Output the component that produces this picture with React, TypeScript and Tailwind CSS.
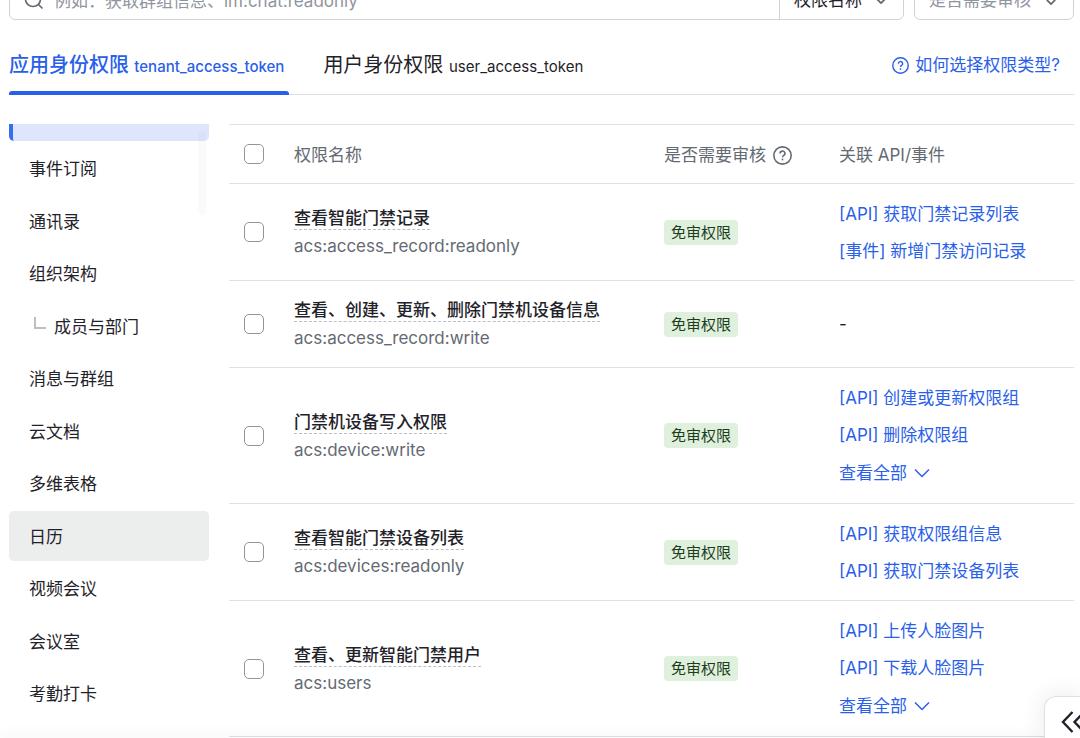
import type { ReactNode } from "react";
import clsx from "clsx";

interface IScope {
  name: string;
  code: string;
  links: string[];
  more?: boolean;
}

interface ICategory {
  label: string;
  hovered?: boolean;
  child?: boolean;
}

const categories: ICategory[] = [
  { label: "事件订阅" },
  { label: "通讯录" },
  { label: "组织架构" },
  { label: "成员与部门", child: true },
  { label: "消息与群组" },
  { label: "云文档" },
  { label: "多维表格" },
  { label: "日历", hovered: true },
  { label: "视频会议" },
  { label: "会议室" },
  { label: "考勤打卡" },
];

const scopes: IScope[] = [
  {
    name: "查看智能门禁记录",
    code: "acs:access_record:readonly",
    links: ["[API] 获取门禁记录列表", "[事件] 新增门禁访问记录"],
  },
  {
    name: "查看、创建、更新、删除门禁机设备信息",
    code: "acs:access_record:write",
    links: [],
  },
  {
    name: "门禁机设备写入权限",
    code: "acs:device:write",
    links: ["[API] 创建或更新权限组", "[API] 删除权限组"],
    more: true,
  },
  {
    name: "查看智能门禁设备列表",
    code: "acs:devices:readonly",
    links: ["[API] 获取权限组信息", "[API] 获取门禁设备列表"],
  },
  {
    name: "查看、更新智能门禁用户",
    code: "acs:users",
    links: ["[API] 上传人脸图片", "[API] 下载人脸图片"],
    more: true,
  },
];

const HelpIcon = ({ className }: { className: string }) => (
  <svg
    viewBox="0 0 18 18"
    fill="none"
    stroke="currentColor"
    strokeWidth="1.5"
    className={className}
    aria-hidden
  >
    <circle cx="9" cy="9" r="8.2" />
    <path d="M6.700 7.100a2.300 2.200 0 1 1 3.500 1.800c-.8.5-1.200.9-1.200 1.700" />
    <path d="M9 11.900v1.700" />
  </svg>
);

const ChevronIcon = ({ className }: { className: string }) => (
  <svg
    viewBox="0 0 16 10"
    fill="none"
    stroke="currentColor"
    className={className}
    aria-hidden
  >
    <path d="M1 1.5 8 8.5 15 1.5" />
  </svg>
);

const Checkbox = ({ label }: { label: string }) => (
  <input
    type="checkbox"
    aria-label={label}
    className="block size-5 appearance-none rounded-[5px] border border-[#8f959e] bg-white checked:bg-[#2a5fe9]"
  />
);

const FilterSelect = ({
  label,
  option,
  className,
}: {
  label: string;
  option: string;
  className: string;
}) => (
  <div className={clsx("relative h-[38px] border-[#d0d3d6]", className)}>
    <select
      aria-label={label}
      className="size-full appearance-none bg-transparent pl-[14px] outline-none"
    >
      <option>{option}</option>
    </select>
    <ChevronIcon className="pointer-events-none absolute right-[17px] top-4 h-[6px] w-[10px] stroke-3 text-[#646a73]" />
  </div>
);

const SearchBar = () => (
  <div className="-mt-[18px] flex gap-[10px]">
    <div className="flex min-w-0 flex-1 rounded-md border border-[#d0d3d6]">
      <label className="flex min-w-0 flex-1 items-center gap-[10px] pl-[14px]">
        <svg
          viewBox="0 0 20 20"
          fill="none"
          stroke="currentColor"
          strokeWidth="1.7"
          className="size-5 shrink-0 text-[#646a73]"
          aria-hidden
        >
          <circle cx="9" cy="8" r="7.5" />
          <path d="m14.500 13.500 4 4" />
        </svg>
        <input
          type="text"
          aria-label="搜索权限"
          placeholder="例如：获取群组信息、im:chat:readonly"
          className="h-9 min-w-0 flex-1 outline-none placeholder:text-[#8f959e]"
        />
      </label>
      <FilterSelect
        label="搜索类型"
        option="权限名称"
        className="-my-px w-[124px] border-l"
      />
    </div>
    <FilterSelect
      label="审核"
      option="是否需要审核"
      className="w-[160px] rounded-md border text-[#8f959e]"
    />
  </div>
);

const Tab = ({
  title,
  token,
  active = false,
}: {
  title: string;
  token: string;
  active?: boolean;
}) => (
  <button
    type="button"
    role="tab"
    aria-selected={active}
    className={clsx("-mb-px", active && "font-medium text-[#2a5fe9]")}
  >
    <span className="block whitespace-nowrap pb-[10px] pr-[5px] text-[20px] leading-7">
      {title} <span className="text-[15px]">{token}</span>
    </span>
    <span
      className={clsx("block h-1 rounded-t-[3px]", active && "bg-[#2a5fe9]")}
    />
  </button>
);

const Sidebar = () => (
  <nav className="relative w-[200px] shrink-0">
    {/* bottom edge of the selected category, the rest is scrolled away */}
    <div className="mb-[2px] h-[17px] rounded-b-[5px] border-l-4 border-[#3a6cf0] bg-[#dee6fb]" />
    <ul>
      {categories.map(({ label, hovered, child }) => (
        <li key={label} className="odd:mb-[3px] even:mb-[2px]">
          <a
            href="#"
            className={clsx(
              "flex h-[50px] items-center rounded-[5px] pl-5 pt-[3px]",
              hovered && "bg-[#eceeed]",
            )}
          >
            {child && (
              <span className="mb-[10px] ml-[5px] mr-2 h-3 w-3 border-b-2 border-l-2 border-[#bbbfc4]" />
            )}
            {label}
          </a>
        </li>
      ))}
    </ul>
    <div className="absolute right-[3px] top-2 h-[83px] w-2 rounded bg-black/2" />
  </nav>
);

const HeadCell = ({ children }: { children: ReactNode }) => (
  <th className="pt-[3px] text-left font-normal text-[#646a73]">
    <span className="flex items-center gap-[7px]">{children}</span>
  </th>
);

const ScopeRow = ({ name, code, links, more }: IScope) => (
  <tr className="border-b border-[#dee0e3]">
    <td className="pl-[15px]">
      <Checkbox label={name} />
    </td>
    <td className="pb-[15px] pt-[17px]">
      <div className="h-[26px]">
        <span className="inline-block border-b border-dashed border-[#bbbfc4] font-medium leading-[21px]">
          {name}
        </span>
      </div>
      <div className="h-7 leading-7 text-[#646a73]">{code}</div>
    </td>
    <td className="pt-px">
      <span className="inline-block rounded bg-[#dff0dd] px-[7px] text-[15px] leading-[25px] text-[#1c3d1c]">
        免审权限
      </span>
    </td>
    <td className="leading-[26px]">
      {links.length === 0 ? (
        "-"
      ) : (
        <div className="flex flex-col items-start gap-[11px] pb-4 pt-[17px] text-[#2a5fe9]">
          {links.map((link) => (
            <a key={link} href="#" className="whitespace-nowrap">
              {link}
            </a>
          ))}
          {more && (
            <button type="button" className="flex h-7 items-center gap-[7px]">
              查看全部
              <ChevronIcon className="h-[10px] w-4 stroke-[1.5]" />
            </button>
          )}
        </div>
      )}
    </td>
  </tr>
);

const ScopeTable = () => (
  <table className="min-w-0 flex-1 table-fixed border-collapse">
    <colgroup>
      <col className="w-[65px]" />
      <col />
      <col className="w-[175px]" />
      <col className="w-[235px]" />
    </colgroup>
    <thead>
      <tr className="h-[59px] border-y border-[#dee0e3]">
        <td className="pl-[15px]">
          <Checkbox label="全选" />
        </td>
        <HeadCell>权限名称</HeadCell>
        <HeadCell>
          是否需要审核
          <HelpIcon className="size-[19px]" />
        </HeadCell>
        <HeadCell>关联 API/事件</HeadCell>
      </tr>
    </thead>
    <tbody>
      {scopes.map((scope) => (
        <ScopeRow key={scope.code} {...scope} />
      ))}
    </tbody>
  </table>
);

export default function App() {
  return (
    <div className="overflow-hidden bg-white pl-[9px] pr-[6px] font-['Inter','Noto_Sans_CJK_SC',sans-serif] text-[17px] text-[#1f2329]">
      <SearchBar />
      <div className="flex items-end border-b border-[#dee0e3] pt-[31px]">
        <div role="tablist" className="flex gap-[34px]">
          <Tab title="应用身份权限" token="tenant_access_token" active />
          <Tab title="用户身份权限" token="user_access_token" />
        </div>
        <a
          href="#"
          className="mb-[15px] ml-auto mr-[14px] flex items-center gap-[6px] leading-7 text-[#2a5fe9]"
        >
          <HelpIcon className="size-[17px]" />
          如何选择权限类型?
        </a>
      </div>
      <main className="mt-[29px] flex items-start gap-5">
        <Sidebar />
        <ScopeTable />
      </main>
      <div className="fixed inset-x-0 bottom-0 shadow-[0_0_14px_2px_rgba(31,35,41,0.08)]" />
      <button
        type="button"
        aria-label="展开"
        className="fixed bottom-0 right-0 flex h-[42px] w-9 items-center overflow-hidden rounded-tl-xl border-l border-t border-[#dee0e3] bg-white pl-4 pt-2 shadow-[0_0_24px_rgba(31,35,41,0.1)]"
      >
        <svg
          viewBox="0 0 24 24"
          fill="none"
          stroke="currentColor"
          strokeWidth="2.4"
          className="size-6 shrink-0"
          aria-hidden
        >
          <path d="M11.500 2 2 12l9.500 10M23 2l-9.500 10L23 22" />
        </svg>
      </button>
    </div>
  );
}
